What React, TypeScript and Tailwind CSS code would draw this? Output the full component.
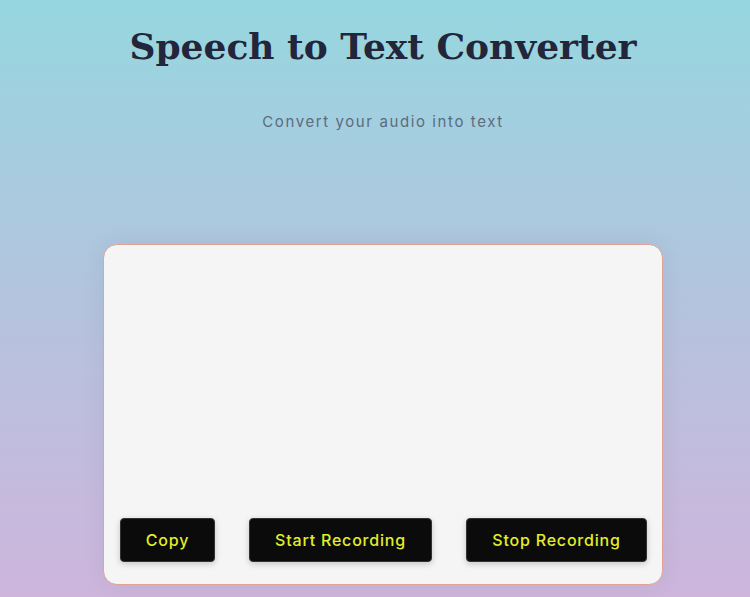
export default function App() {
  return (
    <div className="min-h-[597px] w-full bg-gradient-to-b from-[#95d7e0] via-[#b3c3de] to-[#cdb5dc] flex flex-col items-center pl-[16px]" style={{ fontFamily: "Inter, 'Open Sans', sans-serif" }}>
      <h1 className="mt-[22px] text-[36px] leading-[48px] font-bold text-[#23263a] tracking-[0px]" style={{ fontFamily: "'DejaVu Serif', 'Liberation Serif', serif" }}>
        Speech to Text Converter
      </h1>
      <p className="mt-[42px] text-[15px] leading-[20px] text-[#5b6b7e] tracking-[1.6px]">Convert your audio into text</p>
      <div className="mt-[112px] w-[560px] h-[341px] bg-[#f5f5f5] border border-[#e2a394] rounded-[14px] shadow-[0_0_24px_rgba(0,0,0,0.06)] flex flex-col justify-end pl-[16px] pr-[15px] pb-[22px]">
        <div className="flex justify-between">
          <button className="w-[95px] h-[44px] bg-[#0b0b0b] rounded-[4px] border border-[#333] text-[#e2ee2a] text-[16px] font-medium tracking-[0.8px] shadow-[0_2px_6px_rgba(0,0,0,0.2)]">Copy</button>
          <button className="w-[183px] h-[44px] bg-[#0b0b0b] rounded-[4px] border border-[#333] text-[#e2ee2a] text-[16px] font-medium tracking-[0.8px] shadow-[0_2px_6px_rgba(0,0,0,0.2)]">Start Recording</button>
          <button className="w-[181px] h-[44px] bg-[#0b0b0b] rounded-[4px] border border-[#333] text-[#e2ee2a] text-[16px] font-medium tracking-[0.8px] shadow-[0_2px_6px_rgba(0,0,0,0.2)]">Stop Recording</button>
        </div>
      </div>
    </div>
  );
}
